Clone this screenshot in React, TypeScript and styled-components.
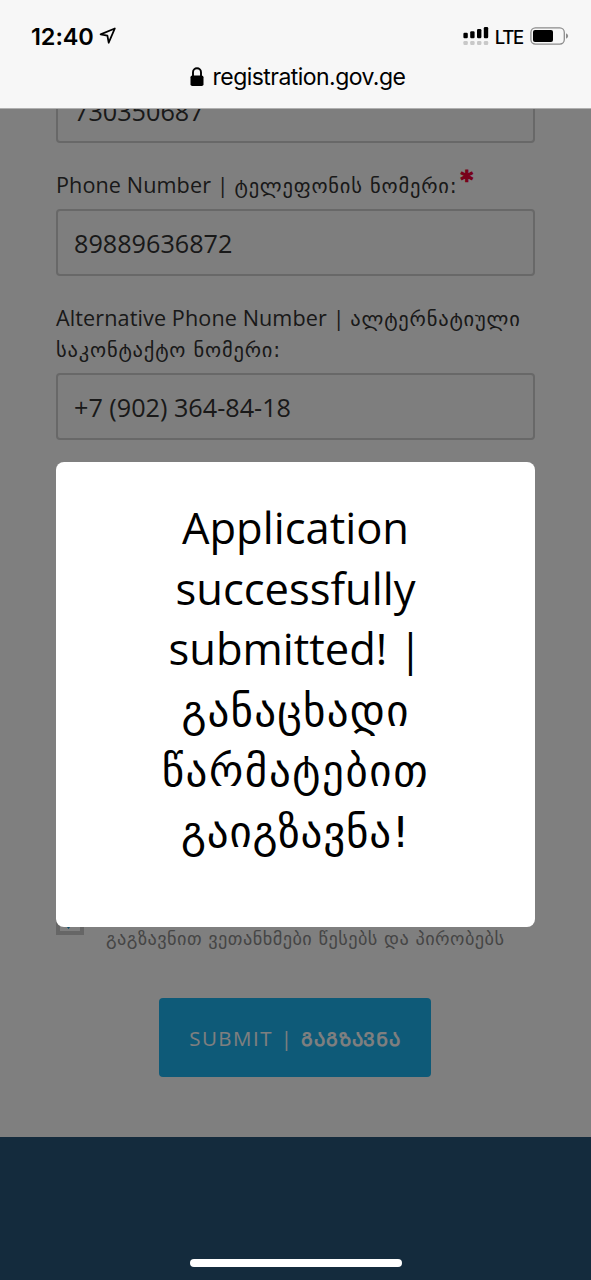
import {type FC, type ReactNode} from 'react';
import styled, {createGlobalStyle, css} from 'styled-components';

const GlobalStyle = createGlobalStyle`
  * {
    box-sizing: border-box;
  }

  body {
    margin: 0;
    background: #fff;
    font-family: 'Open Sans', 'DejaVu Sans', sans-serif;
    color: #333;
  }
`;

const Screen = styled.div`
  display: flex;
  flex-direction: column;
  width: 591px;
  height: 1280px;
  overflow: hidden;
`;

const BrowserBar = styled.header`
  flex: none;
  height: 109px;
  background: #f7f7f7;
  border-bottom: 1px solid #b0b0b0;
  color: #000;
  font-family: Inter, sans-serif;
`;

const StatusRow = styled.div`
  display: flex;
  align-items: center;
  height: 44px;
  margin-top: 14px;
  padding: 0 22px 0 31px;
`;

const Clock = styled.span`
  font-size: 23.5px;
  font-weight: 600;
  letter-spacing: -0.1px;
  margin-right: 5px;
`;

const Network = styled.span`
  font-size: 18.5px;
  font-weight: 500;
  letter-spacing: -1.2px;
  margin: 2px 7px 0 6px;
`;

const Spacer = styled.div`
  flex: 1;
`;

const AddressRow = styled.div`
  display: flex;
  justify-content: center;
  align-items: center;
  height: 38px;
  padding-left: 4px;
  gap: 9px;
  font-size: 23px;
  letter-spacing: -0.55px;
`;

const Page = styled.main`
  position: relative;
  flex: 1;
  display: flex;
  flex-direction: column;
  overflow: hidden;
`;

const Form = styled.form`
  flex: none;
  display: flex;
  flex-direction: column;
  height: 1028px;
  padding: 0 56px;
`;

const Label = styled.label`
  font-size: 21.6px;
  line-height: 31px;
  letter-spacing: 0.1px;
  margin: 26px 0 9px;
  white-space: nowrap;
`;

const Georgian = styled.span<{size: number; spacing?: number; bold?: boolean}>`
  font-family: 'DejaVu Sans', sans-serif;
  font-size: ${props => props.size}px;
  letter-spacing: ${props => props.spacing ?? 0}px;
  line-height: 0;
  ${props =>
    props.bold &&
    css`
      font-weight: 700;
    `}
`;

const Required = styled.sup`
  color: #f00034;
  font-family: 'DejaVu Sans', sans-serif;
  font-size: 24px;
  font-weight: 700;
  line-height: 0;
  vertical-align: 5px;
  margin-left: 3px;
  -webkit-text-stroke: 1.2px #f00034;
`;

const Field = styled.div<{cut?: boolean}>`
  flex: none;
  display: flex;
  align-items: center;
  width: 479px;
  height: 67px;
  margin-top: ${props => (props.cut ? '-33px' : 0)};
  padding: ${props => (props.cut ? '3px' : 0)} 16px 0;
  border: 2px solid #d0d0d0;
  border-radius: 4px;
  background: #fcfcfc;
  font-size: 25.2px;
`;

const Terms = styled.div`
  display: flex;
  align-items: flex-end;
  gap: 22px;
  height: 52px;
  margin-top: 460px;
  color: #8b8b8b;
  white-space: nowrap;
`;

const TermsText = styled.p`
  margin: 0;
  line-height: 26px;
`;

const Checkbox = styled.span`
  display: flex;
  justify-content: center;
  width: 28px;
  height: 28px;
  margin-bottom: 17px;
  border: 4px solid #ccc;
  background: #fff;
`;

const Submit = styled.button`
  align-self: center;
  flex: none;
  width: 272px;
  height: 79px;
  margin: 46px 1px 0 0;
  border: 0;
  border-radius: 4px;
  background: #1cb4f0;
  color: #fff;
  font: 20.5px 'Open Sans', sans-serif;
  letter-spacing: 1.5px;
  word-spacing: 1px;
  white-space: nowrap;
`;

const Footer = styled.footer`
  flex: 1;
  background: #29567a;
`;

const Overlay = styled.div`
  position: absolute;
  inset: 0;
  display: flex;
  justify-content: center;
  align-items: flex-start;
  padding-top: 353px;
  background: rgba(0, 0, 0, 0.5);
`;

const Dialog = styled.section`
  width: 479px;
  height: 465px;
  padding-top: 36px;
  border-radius: 8px;
  background: #fff;
  color: #000;
  font-size: 43.5px;
  line-height: 60.6px;
  text-align: center;
`;

const Line = styled.div`
  height: 60.6px;
  white-space: nowrap;
`;

const HomeIndicator = styled.div`
  position: absolute;
  left: 190px;
  bottom: 13px;
  width: 212px;
  height: 8px;
  border-radius: 4px;
  background: #fff;
`;

const LocationIcon: FC = () => (
  <svg width="18" height="18" viewBox="0 0 18 18" fill="none">
    <path d="M1.6 7.3 15.8 1.5 9.7 15.7 8.4 8.7Z" stroke="#000" strokeWidth="1.8" strokeLinejoin="round" />
  </svg>
);

const LockIcon: FC = () => (
  <svg width="14" height="20" viewBox="0 0 14 20" fill="none">
    <path d="M3 9V5.2a4 4 0 0 1 8 0V9" stroke="#000" strokeWidth="1.9" />
    <rect x="0.5" y="8.5" width="13" height="10.5" rx="1.8" fill="#000" />
  </svg>
);

const SignalIcon: FC = () => (
  <svg width="26" height="20" viewBox="0 0 26 20">
    {[5.5, 7, 9.3, 11.3].map((height, i) => (
      <g key={height}>
        <rect x={0.4 + i * 6.8} y={12.3 - height} width="4.4" height={height} rx="1.2" fill="#000" />
        <rect x={0.4 + i * 6.8} y="15" width="4.4" height="4" rx="1.2" fill="#c8c8c8" />
      </g>
    ))}
  </svg>
);

const BatteryIcon: FC = () => (
  <svg width="39" height="18" viewBox="0 0 39 18">
    <rect x="0.9" y="0.9" width="33.4" height="16.2" rx="4.5" fill="none" stroke="#8c8c8c" strokeWidth="1.3" />
    <rect x="3" y="3" width="20" height="12" rx="2" fill="#000" />
    <path d="M36 6.2q2.2 1 2.2 2.8t-2.2 2.8z" fill="#8c8c8c" />
  </svg>
);

const CheckIcon: FC = () => (
  <svg width="20" height="20" viewBox="0 0 20 20" fill="none">
    <path d="M2 8 8.5 15.5 18 1" stroke="#1595cc" strokeWidth="3" />
  </svg>
);

type DialogLine = {key: string; content: ReactNode};

const dialogLines: DialogLine[] = [
  {key: 'application', content: 'Application'},
  {key: 'successfully', content: 'successfully'},
  {key: 'submitted', content: 'submitted! |'},
  {key: 'ganacxadi', content: <Georgian size={43} spacing={1.2}>განაცხადი</Georgian>},
  {key: 'warmatebit', content: <Georgian size={43} spacing={1.6}>წარმატებით</Georgian>},
  {key: 'gaigzavna', content: <Georgian size={43} spacing={0.8}>გაიგზავნა!</Georgian>},
];

const App: FC = () => (
  <>
    <GlobalStyle />
    <Screen>
      <BrowserBar>
        <StatusRow>
          <Clock>12:40</Clock>
          <LocationIcon />
          <Spacer />
          <SignalIcon />
          <Network>LTE</Network>
          <BatteryIcon />
        </StatusRow>
        <AddressRow>
          <LockIcon />
          registration.gov.ge
        </AddressRow>
      </BrowserBar>
      <Page>
        <Form>
          <Field cut>730350687</Field>
          <Label>
            Phone Number | <Georgian size={20.5} spacing={0.8}>ტელეფონის ნომერი:</Georgian>
            <Required>*</Required>
          </Label>
          <Field>89889636872</Field>
          <Label>
            Alternative Phone Number | <Georgian size={20.5} spacing={0.8}>ალტერნატიული</Georgian>
            <br />
            <Georgian size={20.5} spacing={0.8}>საკონტაქტო ნომერი:</Georgian>
          </Label>
          <Field>+7 (902) 364-84-18</Field>
          <Terms>
            <Checkbox>
              <CheckIcon />
            </Checkbox>
            <TermsText>
              <Georgian size={18.3} spacing={0.45}>გაგზავნით ვეთანხმები წესებს და პირობებს</Georgian>
            </TermsText>
          </Terms>
          <Submit type="button">
            SUBMIT | <Georgian size={19} spacing={0.8} bold>ᲒᲐᲒᲖᲐᲕᲜᲐ</Georgian>
          </Submit>
        </Form>
        <Footer />
        <Overlay>
          <Dialog role="dialog">
            {dialogLines.map(({key, content}) => (
              <Line key={key}>{content}</Line>
            ))}
          </Dialog>
        </Overlay>
        <HomeIndicator />
      </Page>
    </Screen>
  </>
);

export default App;
